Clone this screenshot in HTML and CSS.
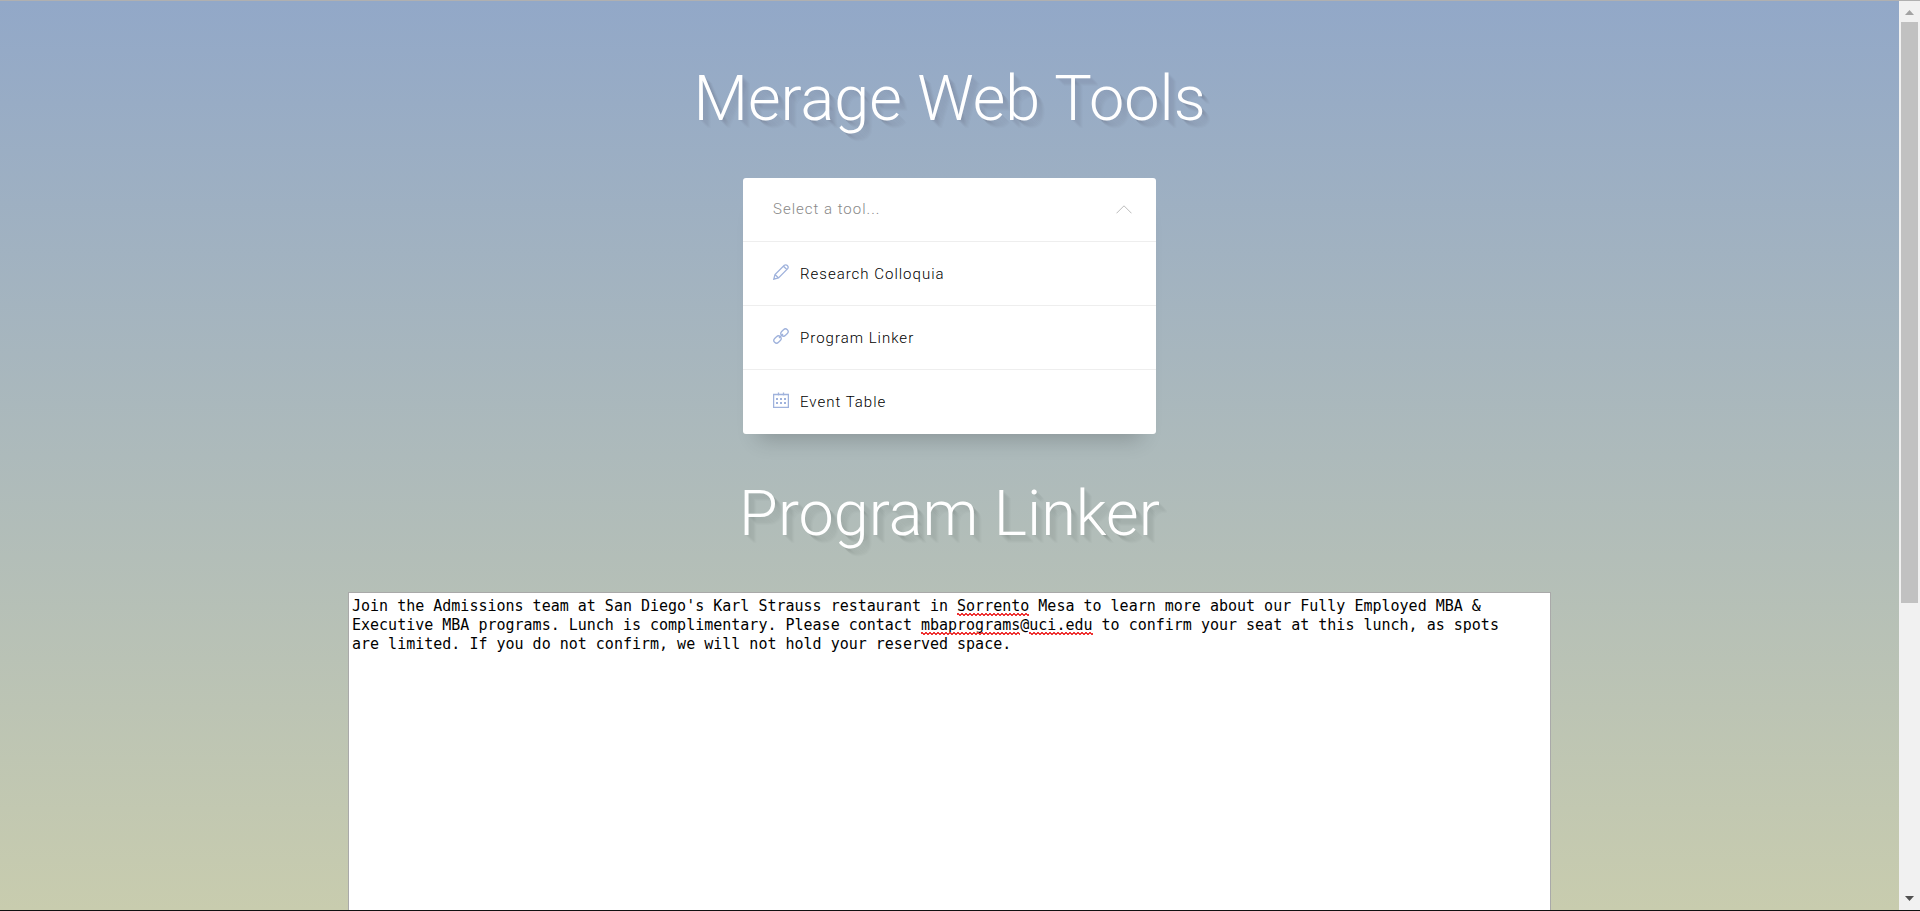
FILE: index.html
```html
<!DOCTYPE html>
<html lang="en">
<head>
<meta charset="utf-8">
<title>Merage Web Tools</title>
<link rel="stylesheet" href="styles.css">
</head>
<body>
<div class="window">
  <main class="page">
    <h1 class="title">Merage Web Tools</h1>
    <nav class="picker" aria-label="Tools">
      <button class="picker-head" type="button" aria-expanded="true">
        <span>Select a tool...</span>
        <svg class="chevron" viewBox="0 0 16 9" aria-hidden="true"><path d="M.5 8.300 8 .8l7.500 7.500"/></svg>
      </button>
      <a class="picker-item" href="#research">
        <svg class="icon" viewBox="0 0 16 16" aria-hidden="true"><path d="M.8 15.200 2 10.500 11.300 1.300Q12.800 .2 14.400 1.600Q15.800 3.200 14.700 4.700L5.500 14ZM2 10.500 5.500 14M10.500 2.200 13.800 5.500"/></svg>
        <span>Research Colloquia</span>
      </a>
      <a class="picker-item" href="#linker">
        <svg class="icon" viewBox="0 0 16 16" aria-hidden="true"><rect x="-4" y="-2.700" width="8" height="5.400" rx="2.700" transform="translate(11.500 4.500) rotate(-45)"/><rect x="-4" y="-2.700" width="8" height="5.400" rx="2.700" transform="translate(4.500 11.500) rotate(-45)"/><path d="M6 10l4-4"/></svg>
        <span>Program Linker</span>
      </a>
      <a class="picker-item" href="#events">
        <svg class="icon" viewBox="0 0 16 16" aria-hidden="true"><path d="M.6 2.500h14.800v12.900H.6zM5.500 .5v3M10.500 .5v3"/><path class="dots" d="M3 6h2v2H3zM7 6h2v2H7zM11 6h2v2h-2zM3 10h2v2H3zM7 10h2v2H7zM11 10h2v2h-2z"/></svg>
        <span>Event Table</span>
      </a>
    </nav>
    <h2 class="title" id="linker">Program Linker</h2>
    <div class="editor">
      <textarea class="editor-text" aria-labelledby="linker" spellcheck="false">Join the Admissions team at San Diego's Karl Strauss restaurant in Sorrento Mesa to learn more about our Fully Employed MBA &amp; Executive MBA programs. Lunch is complimentary. Please contact mbaprograms@uci.edu to confirm your seat at this lunch, as spots are limited. If you do not confirm, we will not hold your reserved space.</textarea>
      <span class="squiggle squiggle-name" aria-hidden="true"></span>
      <span class="squiggle squiggle-user" aria-hidden="true"></span>
      <span class="squiggle squiggle-host" aria-hidden="true"></span>
    </div>
  </main>
  <div class="scrollbar" aria-hidden="true">
    <svg class="arrow arrow-up" viewBox="0 0 9 5"><path d="M0 5 4.500 0 9 5z"/></svg>
    <div class="track"><div class="thumb"></div></div>
    <svg class="arrow" viewBox="0 0 9 5"><path d="M0 0h9L4.500 5z"/></svg>
  </div>
</div>
</body>
</html>
```
FILE: styles.css
```css
* { box-sizing: border-box; }

body {
  margin: 0;
  font-family: Roboto, "Liberation Sans", sans-serif;
  font-weight: 300;
}

.window {
  display: flex;
  height: 100vh;
  overflow: hidden;
  border-top: 1px solid #b0b0b0;
  border-bottom: 1px solid #111;
}

.page {
  flex: 1;
  display: flex;
  flex-direction: column;
  align-items: center;
  padding-top: 60px;
  overflow: hidden;
  background: linear-gradient(#92a8c8, #c8ccae);
}

.title {
  margin: 0;
  color: #fff;
  font-size: 63px;
  font-weight: 300;
  line-height: 76px;
  text-shadow:
    1px 1px 0 rgba(0, 0, 0, .02), 2px 2px 0 rgba(0, 0, 0, .02),
    3px 3px 0 rgba(0, 0, 0, .02), 4px 4px 0 rgba(0, 0, 0, .02),
    5px 5px 0 rgba(0, 0, 0, .02), 6px 6px 0 rgba(0, 0, 0, .02),
    7px 7px 0 rgba(0, 0, 0, .01), 8px 8px 0 rgba(0, 0, 0, .01);
}

.picker {
  flex: none;
  width: 413px;
  margin: 41px 0 42px;
  padding-bottom: 1px;
  border-radius: 3px;
  background: #fff;
  box-shadow: 0 20px 20px -15px rgba(0, 0, 0, .2);
  font-size: 15px;
  letter-spacing: 1px;
}

.picker-head,
.picker-item {
  display: flex;
  align-items: center;
  width: 100%;
  height: 64px;
  padding: 0 24px 0 30px;
}

.picker-head {
  justify-content: space-between;
  height: 63px;
  padding-bottom: 1px;
  border: 0;
  background: none;
  color: #888;
  font: inherit;
  letter-spacing: inherit;
}

.picker-item {
  gap: 11px;
  border-top: 1px solid #eee;
  color: #000;
  text-decoration: none;
}

.chevron,
.icon {
  width: 16px;
  fill: none;
  stroke: #bbb;
}

.icon {
  height: 16px;
  margin-bottom: 4px;
  stroke: #9fb2dc;
  stroke-width: 1.3;
}

.dots {
  fill: #9fb2dc;
  stroke: none;
}

.editor {
  position: relative;
  flex: none;
  width: 1203px;
  max-width: 100%;
  margin-top: 40px;
  font: 15px/19px "DejaVu Sans Mono", "Liberation Mono", monospace;
}

.editor-text {
  display: block;
  width: 100%;
  height: 480px;
  padding: 4px 30px 4px 3px;
  border: 1px solid #a9a9a9;
  background: #fff;
  color: #000;
  font: inherit;
  resize: none;
}

.squiggle {
  position: absolute;
  height: 3px;
  background:
    linear-gradient(45deg, transparent 40%, #e33 40% 60%, transparent 60%) 0 0 / 4px 3px,
    linear-gradient(-45deg, transparent 40%, #e33 40% 60%, transparent 60%) 2px 0 / 4px 3px;
}

.squiggle-name {
  top: 21px;
  left: calc(4px + 67ch);
  width: 8ch;
}

.squiggle-user {
  top: 40px;
  left: calc(4px + 63ch);
  width: 11ch;
}

.squiggle-host {
  top: 40px;
  left: calc(4px + 75ch);
  width: 7ch;
}

.scrollbar {
  display: flex;
  flex-direction: column;
  align-items: center;
  width: 21px;
  padding: 9px 0;
  background: #f1f1f1;
}

.arrow {
  width: 9px;
  height: 5px;
  fill: #505050;
}

.arrow-up { fill: #a3a3a3; }

.track {
  flex: 1;
  width: 17px;
  padding: 7px 0;
}

.thumb {
  height: 67%;
  background: #c1c1c1;
}
```
